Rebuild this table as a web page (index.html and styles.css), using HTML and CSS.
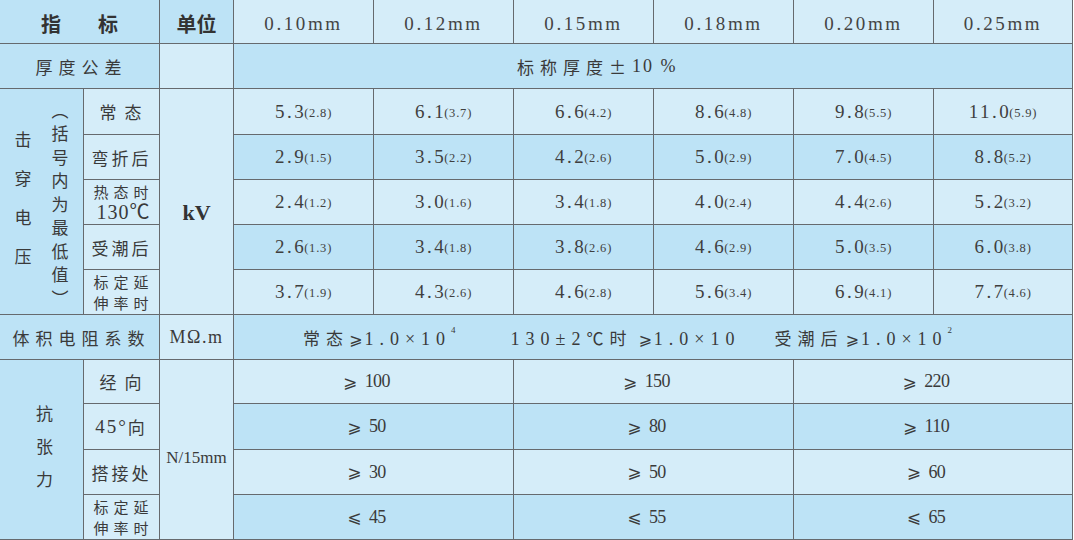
FILE: index.html
```html
<!DOCTYPE html>
<html lang="zh">
<head>
<meta charset="utf-8">
<title>性能指标</title>
<link rel="stylesheet" href="styles.css">
</head>
<body>
<div class="sheet">
  <!-- row 1 -->
  <div class="c md span2 head top"><span>指</span><span>标</span></div>
  <div class="c md head top">单位</div>
  <div class="c lt mm top">0.10mm</div>
  <div class="c lt mm top">0.12mm</div>
  <div class="c lt mm top">0.15mm</div>
  <div class="c lt mm top">0.18mm</div>
  <div class="c lt mm top">0.20mm</div>
  <div class="c lt mm top">0.25mm</div>

  <!-- row 2 -->
  <div class="c md span2 lbl wide">厚度公差</div>
  <div class="c lt"></div>
  <div class="c md span6 tol"><span class="cjk">标称厚度±</span><span class="lat">10 %</span></div>

  <!-- rows 3-7 -->
  <div class="c md rows5 vgroup">
    <span class="vt big">击穿电压</span>
    <span class="vt small">（括号内为最低值）</span>
  </div>
  <div class="c lt lbl two">常态</div>
  <div class="c lt rows5 kv">kV</div>
  <div class="c lt val">5.3<small>(2.8)</small></div>
  <div class="c lt val">6.1<small>(3.7)</small></div>
  <div class="c lt val">6.6<small>(4.2)</small></div>
  <div class="c lt val">8.6<small>(4.8)</small></div>
  <div class="c lt val">9.8<small>(5.5)</small></div>
  <div class="c lt val">11.0<small>(5.9)</small></div>

  <div class="c lt lbl">弯折后</div>
  <div class="c md val">2.9<small>(1.5)</small></div>
  <div class="c md val">3.5<small>(2.2)</small></div>
  <div class="c md val">4.2<small>(2.6)</small></div>
  <div class="c md val">5.0<small>(2.9)</small></div>
  <div class="c md val">7.0<small>(4.5)</small></div>
  <div class="c md val">8.8<small>(5.2)</small></div>

  <div class="c lt lbl stack"><span>热态时</span><span class="lat">130℃</span></div>
  <div class="c lt val">2.4<small>(1.2)</small></div>
  <div class="c lt val">3.0<small>(1.6)</small></div>
  <div class="c lt val">3.4<small>(1.8)</small></div>
  <div class="c lt val">4.0<small>(2.4)</small></div>
  <div class="c lt val">4.4<small>(2.6)</small></div>
  <div class="c lt val">5.2<small>(3.2)</small></div>

  <div class="c lt lbl">受潮后</div>
  <div class="c md val">2.6<small>(1.3)</small></div>
  <div class="c md val">3.4<small>(1.8)</small></div>
  <div class="c md val">3.8<small>(2.6)</small></div>
  <div class="c md val">4.6<small>(2.9)</small></div>
  <div class="c md val">5.0<small>(3.5)</small></div>
  <div class="c md val">6.0<small>(3.8)</small></div>

  <div class="c lt lbl stack"><span>标定延</span><span>伸率时</span></div>
  <div class="c lt val">3.7<small>(1.9)</small></div>
  <div class="c lt val">4.3<small>(2.6)</small></div>
  <div class="c lt val">4.6<small>(2.8)</small></div>
  <div class="c lt val">5.6<small>(3.4)</small></div>
  <div class="c lt val">6.9<small>(4.1)</small></div>
  <div class="c lt val">7.7<small>(4.6)</small></div>

  <!-- row 8 -->
  <div class="c md span2 lbl wide">体积电阻系数</div>
  <div class="c lt unit ohm">MΩ.m</div>
  <div class="c md span6 vol">
    <span class="seg s1"><span class="cjk">常态</span><span class="lat"><span class="ge">⩾</span>1.0×10<sup>4</sup></span></span>
    <span class="seg s2"><span class="lat">130±2</span><span class="cjk">℃时</span><span class="lat gap"><span class="ge">⩾</span>1.0×10</span></span>
    <span class="seg s3"><span class="cjk">受潮后</span><span class="lat gap2"><span class="ge">⩾</span>1.0×10<sup>2</sup></span></span>
  </div>

  <!-- rows 9-12 -->
  <div class="c md rows4 vgroup">
    <span class="vt tens">抗张力</span>
  </div>
  <div class="c lt lbl two">经向</div>
  <div class="c lt rows4 unit nmm">N/15mm</div>
  <div class="c lt span2 ten"><span class="ge">⩾</span>100</div>
  <div class="c lt span2 ten"><span class="ge">⩾</span>150</div>
  <div class="c lt span2 ten"><span class="ge">⩾</span>220</div>

  <div class="c lt lbl"><span class="lat">45°</span>向</div>
  <div class="c md span2 ten"><span class="ge">⩾</span>50</div>
  <div class="c md span2 ten"><span class="ge">⩾</span>80</div>
  <div class="c md span2 ten"><span class="ge">⩾</span>110</div>

  <div class="c lt lbl">搭接处</div>
  <div class="c lt span2 ten"><span class="ge">⩾</span>30</div>
  <div class="c lt span2 ten"><span class="ge">⩾</span>50</div>
  <div class="c lt span2 ten"><span class="ge">⩾</span>60</div>

  <div class="c lt lbl stack"><span>标定延</span><span>伸率时</span></div>
  <div class="c md span2 ten"><span class="ge">⩽</span>45</div>
  <div class="c md span2 ten"><span class="ge">⩽</span>55</div>
  <div class="c md span2 ten"><span class="ge">⩽</span>65</div>
</div>
</body>
</html>
```
FILE: styles.css
```css
html, body {
  margin: 0;
  background: #ffffff;
}

.sheet {
  display: grid;
  grid-template-columns: 83px 75px 73px repeat(5, 139px) 138px;
  grid-template-rows: 43px 44px 45px 44px 44px 44px 44px 44px 43px 45px 44px 44px;
  gap: 1px;
  width: max-content;
  background: #666a6e;
  border-right: 1px solid #666a6e;
  border-bottom: 1px solid #666a6e;
  font-family: "Noto Sans CJK SC", sans-serif;
  color: #3a3a3a;
}

.c {
  display: flex;
  align-items: center;
  justify-content: center;
  overflow: hidden;
  white-space: nowrap;
}

.lt { background: #d5edf9; }
.md { background: #bde3f6; }

.span2 { grid-column: span 2; }
.span6 { grid-column: span 6; }
.rows5 { grid-row: span 5; }
.rows4 { grid-row: span 4; }

.cjk { font-family: "Noto Sans CJK SC", sans-serif; }
.lat { font-family: "Liberation Serif", "Noto Sans CJK SC", serif; }

/* header */
.top { padding-top: 4px; }
.head {
  font-weight: 700;
  font-size: 20px;
  color: #333;
}
.head span + span { margin-left: 37px; }

.mm {
  font-family: "Liberation Serif", serif;
  font-size: 19px;
  letter-spacing: 2.6px;
  color: #444;
}

/* labels */
.lbl {
  font-size: 17px;
  letter-spacing: 3px;
  color: #3a3a3a;
}
.lbl.two { letter-spacing: 8px; padding-left: 6px; }
.lbl.wide { letter-spacing: 6px; padding-left: 4px; }
.lbl .lat { font-size: 19px; letter-spacing: 2px; }

.stack {
  flex-direction: column;
  font-size: 15px;
  letter-spacing: 5px;
  line-height: 21.5px;
  padding-left: 4px;
}
.stack .lat { font-size: 20px; letter-spacing: 1px; }

/* vertical groups */
.vgroup { gap: 12px; }
.vt {
  writing-mode: vertical-rl;
  font-size: 17px;
}
.vt.big { letter-spacing: 22px; margin-bottom: -14px; }
.vt.small { letter-spacing: 6.5px; margin-top: 12px; }
.vt.tens { letter-spacing: 16px; margin-top: 10px; margin-left: 6px; }

.kv {
  font-family: "Liberation Serif", serif;
  font-weight: 700;
  font-size: 22px;
  color: #333;
  padding-top: 22px;
}

.unit {
  font-family: "Liberation Serif", serif;
  font-size: 17px;
  color: #3a3a3a;
}
.ohm { letter-spacing: 1.5px; font-size: 18px; }
.nmm { padding-top: 16px; }

/* data values */
.val {
  font-family: "Liberation Serif", serif;
  font-size: 19px;
  letter-spacing: 2.5px;
  color: #3f3f3f;
}
.val small {
  font-size: 12.5px;
  letter-spacing: 0.8px;
  margin-left: -2px;
  padding-top: 3px;
}

.tol {
  justify-content: flex-start;
  padding-left: 283px;
  font-size: 17px;
}
.tol .cjk { letter-spacing: 6px; }
.tol .lat { font-size: 18px; letter-spacing: 2px; }

.vol {
  justify-content: flex-start;
  padding-left: 69px;
  font-size: 17px;
}
.seg { display: inline-flex; align-items: baseline; }
.seg .cjk { letter-spacing: 6px; }
.seg .lat { font-size: 18px; letter-spacing: 6px; }
.seg .lat .ge { letter-spacing: 2px; }
.s2 { margin-left: 55px; }
.s3 { margin-left: 34px; }
.gap { margin-left: 6px; }
.gap2 { margin-left: 2px; }
.seg sup {
  font-size: 9px;
  letter-spacing: 0;
  position: relative;
  top: -4px;
  vertical-align: top;
}

.ge {
  font-family: "DejaVu Sans", "Noto Sans CJK SC", sans-serif;
  font-size: 16px;
}

.ten {
  font-family: "Liberation Serif", serif;
  font-size: 18px;
  letter-spacing: -0.6px;
  color: #3a3a3a;
  padding-right: 14px;
}
.ten .ge { margin-right: 8px; font-size: 17px; }
```
